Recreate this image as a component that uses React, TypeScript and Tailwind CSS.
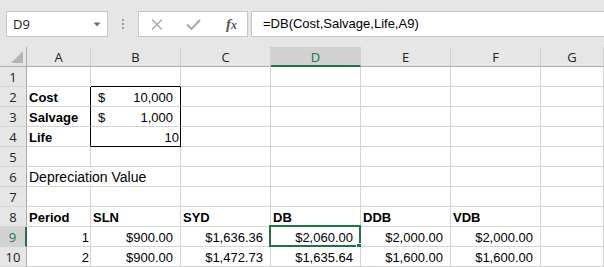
import React from 'react';

// 单元格定义
type CellDef = {
  v?: string;
  cur?: string; // 会计格式的货币符号
  align?: 'l' | 'r' | 'num';
  bold?: boolean;
  span?: number;
  cls?: string;
};

const COLS = ['A', 'B', 'C', 'D', 'E', 'F', 'G'];

const boxL = 'border-r-black';
const rows: CellDef[][] = [
  [{}, { cls: 'border-b-black' }],
  [{ v: 'Cost', bold: true, cls: boxL }, { cur: '$', v: '10,000', align: 'num', cls: boxL }],
  [{ v: 'Salvage', bold: true, cls: boxL }, { cur: '$', v: '1,000', align: 'num', cls: boxL }],
  [{ v: 'Life', bold: true, cls: boxL }, { v: '10', align: 'r', cls: 'border-r-black border-b-black' }],
  [],
  [{ v: 'Depreciation Value', span: 2 }],
  [],
  [
    { v: 'Period', bold: true },
    { v: 'SLN', bold: true },
    { v: 'SYD', bold: true },
    { v: 'DB', bold: true },
    { v: 'DDB', bold: true },
    { v: 'VDB', bold: true },
  ],
  [
    { v: '1', align: 'r' },
    { v: '$900.00', align: 'num' },
    { v: '$1,636.36', align: 'num' },
    { v: '$2,060.00', align: 'num' },
    { v: '$2,000.00', align: 'num' },
    { v: '$2,000.00', align: 'num' },
  ],
  [
    { v: '2', align: 'r' },
    { v: '$900.00', align: 'num' },
    { v: '$1,472.73', align: 'num' },
    { v: '$1,635.64', align: 'num' },
    { v: '$1,600.00', align: 'num' },
    { v: '$1,600.00', align: 'num' },
  ],
];

const SEL_COL = 3; // D
const SEL_ROW = 9;

function Cell({ c, selected }: { c: CellDef; selected: boolean }) {
  const isNum = c.align === 'num' || c.align === 'r';
  return (
    <div
      className={`relative flex whitespace-nowrap bg-white border-r border-b border-[#d4d4d4] leading-[21px] text-black ${
        c.span === 2 ? 'col-span-2' : ''
      } ${isNum || c.cur ? 'text-[13px]' : c.bold ? 'text-[13px] font-bold' : 'text-[14px]'} ${c.cls ?? ''}`}
    >
      {c.cur && <span className="pl-[7px]">{c.cur}</span>}
      {c.v && (
        <span
          className={
            c.align === 'num'
              ? 'ml-auto pr-[7px]'
              : c.align === 'r'
              ? 'ml-auto pr-px'
              : 'pl-[2px]'
          }
        >
          {c.v}
        </span>
      )}
      {selected && (
        <>
          <div className="absolute -left-[2px] -top-[2px] -right-px -bottom-px border-2 border-[#217346] pointer-events-none" />
          <div className="absolute -right-[2px] -bottom-[3px] w-[6px] h-[6px] bg-[#217346] border border-white" />
        </>
      )}
    </div>
  );
}

export default function App() {
  return (
    <div className="w-[604px] h-[267px] overflow-hidden bg-white font-['Liberation_Sans',Arial,sans-serif]">
      {/* 编辑栏 */}
      <div className="h-[47px] bg-[#e6e6e6] flex items-start pt-[11px] pl-[6px]">
        <div className="w-[102px] h-[26px] bg-white border border-[#c6c6c6] flex items-center justify-between pl-[6px] pr-[6px] font-['Open_Sans',sans-serif] text-[13px] leading-[24px] text-[#222]">
          <span>D9</span>
          <svg width="8" height="5" viewBox="0 0 8 5">
            <path d="M0.5 0.5 L7.5 0.5 L4 4.5 Z" fill="#707070" />
          </svg>
        </div>
        <div className="w-[30px] h-[26px] flex flex-col items-center justify-center gap-[2px]">
          <span className="w-[2px] h-[2px] bg-[#9a9a9a]" />
          <span className="w-[2px] h-[2px] bg-[#9a9a9a]" />
          <span className="w-[2px] h-[2px] bg-[#9a9a9a]" />
        </div>
        <div className="w-[110px] h-[26px] bg-white border border-[#c6c6c6] flex items-center">
          <svg width="12" height="11" viewBox="0 0 12 11" className="ml-[12px]">
            <path d="M1 0.5 L11 10.5 M11 0.5 L1 10.5" stroke="#a8a8a8" strokeWidth="1.4" />
          </svg>
          <svg width="15" height="11" viewBox="0 0 15 11" className="ml-[23px]">
            <path d="M1 5.5 L5.5 10 L14 1" stroke="#a8a8a8" strokeWidth="2" fill="none" />
          </svg>
          <span className="ml-[25px] font-['Liberation_Serif',serif] italic font-bold text-[15px] leading-none text-[#555]">
            f<span className="text-[12px]">x</span>
          </span>
        </div>
        <div className="ml-[3px] flex-1 h-[26px] bg-white border border-r-0 border-[#c6c6c6] pl-[11px] text-[13px] leading-[24px] text-black">
          =DB(Cost,Salvage,Life,A9)
        </div>
      </div>

      {/* 工作表 */}
      <div className="grid grid-cols-[27px_64px_90px_90px_90px_90px_90px_1fr] grid-rows-[repeat(11,20px)]">
        <div className="bg-[#e6e6e6] border-r border-b border-[#ababab] flex items-end justify-end pr-[3px] pb-[3px]">
          <svg width="12" height="12" viewBox="0 0 12 12">
            <path d="M12 0 L12 12 L0 12 Z" fill="#b4b4b4" />
          </svg>
        </div>
        {COLS.map((col, i) => (
          <div
            key={col}
            className={`flex justify-center font-['Open_Sans',sans-serif] text-[13px] leading-[20px] border-r border-r-[#d0d0d0] ${
              i === SEL_COL
                ? 'bg-[#d2d2d2] text-[#217346] border-b-2 border-b-[#217346]'
                : 'bg-[#e6e6e6] text-[#222] border-b border-b-[#ababab]'
            }`}
          >
            {col}
          </div>
        ))}
        {rows.map((r, ri) => {
          const n = ri + 1;
          const cells: React.ReactNode[] = [];
          let ci = 0;
          let k = 0;
          while (ci < 7) {
            const c = r[k] ?? {};
            cells.push(<Cell key={ci} c={c} selected={n === SEL_ROW && ci === SEL_COL} />);
            ci += c.span ?? 1;
            k++;
          }
          return (
            <React.Fragment key={n}>
              <div
                className={`flex justify-center font-['Open_Sans',sans-serif] text-[13px] leading-[21px] border-b border-b-[#d4d4d4] ${
                  n === SEL_ROW
                    ? 'bg-[#d2d2d2] text-[#217346] border-r-2 border-r-[#217346]'
                    : 'bg-[#e6e6e6] text-[#222] border-r border-r-[#ababab]'
                }`}
              >
                {n}
              </div>
              {cells}
            </React.Fragment>
          );
        })}
      </div>
    </div>
  );
}
